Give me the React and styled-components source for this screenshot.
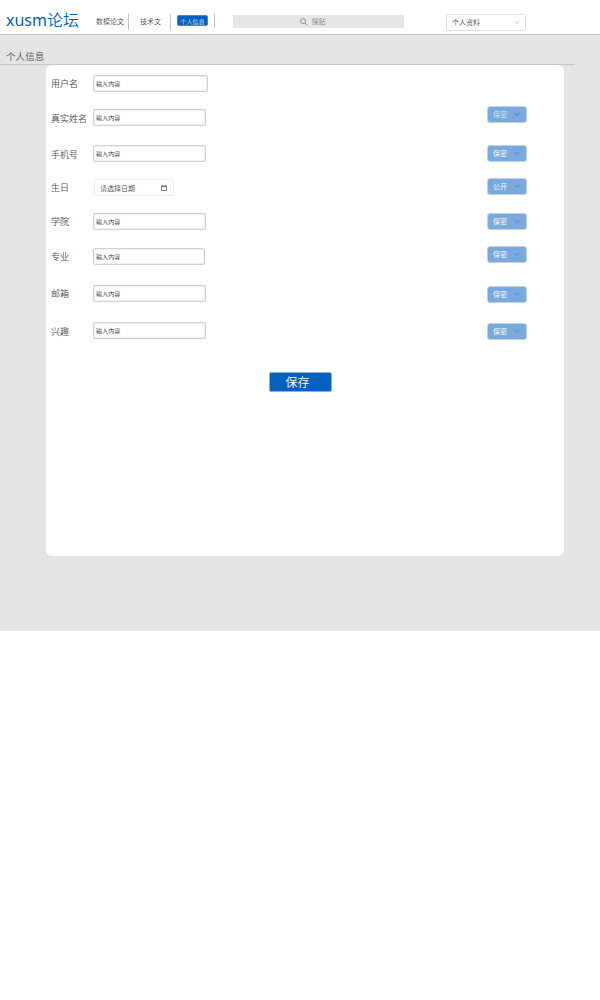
import React from "react";
import styled, { createGlobalStyle } from "styled-components";

const GlobalStyle = createGlobalStyle`
  *, *::before, *::after { box-sizing: border-box; }
  body {
    margin: 0;
    background: #fff;
    color: #505050;
    font-family: "Noto Sans", "Noto Sans CJK SC", sans-serif;
    font-weight: 350;
  }
`;

const Header = styled.header`
  display: flex;
  align-items: flex-start;
  height: 35px;
  padding-left: 6px;
  border-bottom: 1px solid #c8caca;
`;

const Logo = styled.h1`
  width: 90px;
  margin: 8px 0 0;
  color: #0560bf;
  font-size: 16px;
  font-weight: 350;
  line-height: 24px;
  white-space: nowrap;
`;

const LogoName = styled.span`
  font-weight: 400;
`;

const Nav = styled.nav`
  display: flex;
  margin-top: 14px;
`;

const NavItem = styled.span`
  width: ${(p) => p.$width}px;
  height: ${(p) => p.$height || 16}px;
  margin-right: ${(p) => p.$gap}px;
  border-right: 1px solid #c4c4c4;
  font-size: 7px;
  line-height: 16px;
  white-space: nowrap;
`;

const ActiveTag = styled.span`
  display: block;
  width: 31px;
  height: 11px;
  margin-top: 1px;
  border: 1px solid #4089d2;
  border-radius: 2px;
  background: #0560bf;
  color: #e5f0fb;
  font-size: 6.1px;
  line-height: 11px;
  text-align: center;
`;

const Search = styled.div`
  display: flex;
  align-items: center;
  width: 171px;
  height: 13px;
  margin: 15px 0 0 18px;
  padding-left: 67px;
  border-radius: 1px;
  background: #e6e6e6;
  color: #858585;
  font-size: 7px;
  line-height: 13px;

  svg { margin-right: 3.5px; }
`;

const ProfileSelect = styled.div`
  display: flex;
  align-items: center;
  justify-content: space-between;
  width: 80px;
  height: 17px;
  margin: 14px 0 0 42px;
  padding: 0 5px;
  border: 1px solid #e2e2e2;
  border-radius: 2px;
  font-size: 7px;
  line-height: 16px;
`;

const Main = styled.main`
  height: 596px;
  background: #e4e4e4;
`;

const PageTitle = styled.h2`
  width: 575px;
  height: 30px;
  margin: 0;
  padding: 14px 0 0 6px;
  border-bottom: 1px solid #c5c7c7;
  font-size: 9.6px;
  font-weight: 350;
  line-height: 15px;
`;

const Card = styled.section`
  width: 518px;
  height: 491px;
  margin-left: 46px;
  padding: 10px 37px 0 5px;
  border-radius: 6px;
  background: #fff;
`;

const Row = styled.div`
  display: flex;
  align-items: flex-start;
  height: ${(p) => p.$height}px;
`;

const Label = styled.label`
  width: 42px;
  margin-top: ${(p) => p.$shift}px;
  font-size: 9px;
  line-height: 17px;
  white-space: nowrap;
`;

const Field = styled.div`
  width: ${(p) => p.$width}px;
  height: 17px;
  padding: 0 0 0 2px;
  border: 1px solid #d2d2d2;
  border-radius: 2px;
  color: #333;
  font-size: 6.1px;
  line-height: ${(p) => 15 + p.$drop}px;
  box-shadow: inset 0 0 0 1px #f0f0f0;
`;

const DateField = styled.div`
  display: flex;
  align-items: center;
  justify-content: space-between;
  width: 80px;
  height: 17px;
  margin-left: 1px;
  padding: 1px 6px 0 5px;
  border: 1px solid #ececec;
  border-radius: 2px;
  font-size: 7px;
  line-height: 17px;

  svg { margin-bottom: 1px; }
`;

const Privacy = styled.div`
  display: flex;
  align-items: center;
  justify-content: space-between;
  width: 40px;
  height: 17px;
  margin: ${(p) => p.$shift}px 0 0 auto;
  padding: 0 6px 0 5px;
  border: 1px solid #c3d1e0;
  border-radius: 3px;
  background: #79aadd;
  color: ${(p) => (p.$muted ? "#dfe5ec" : "#fff")};
  font-size: 7px;
  line-height: 15px;
`;

const SaveButton = styled.button`
  display: block;
  width: 63px;
  height: 20px;
  margin: 0 0 0 218px;
  padding: 0 6px 0 0;
  border: 1px solid #8ab2dc;
  border-radius: 2px;
  background: #0560bf;
  color: #fff;
  font-family: inherit;
  font-size: 12px;
  font-weight: 350;
  line-height: 17px;
`;

const Chevron = ({ color }) => (
  <svg width="6" height="5" viewBox="0 0 6 5" fill="none" stroke={color} strokeWidth="0.9">
    <path d="M.8 1.2 3 3.5 5.2 1.2" />
  </svg>
);

const SearchIcon = () => (
  <svg width="8" height="8" viewBox="0 0 8 8" fill="none" stroke="#8b8b8b" strokeWidth="0.9">
    <circle cx="3.1" cy="3.1" r="2.5" />
    <path d="m5 5 2.5 2.5" />
  </svg>
);

const CalendarIcon = () => (
  <svg width="6" height="6" viewBox="0 0 6 6" fill="none" stroke="#666" strokeWidth="0.8">
    <path d="M.5 1h5v4.5h-5zM.5 1.6h5M1.7 0v1.3M4.3 0v1.3" />
  </svg>
);

const rows = [
  { label: "用户名", height: 34, width: 115, shift: 0 },
  { label: "真实姓名", height: 36, width: 113, shift: 0.6, privacy: "保密", offset: -3, muted: true, arrow: "#47729f" },
  { label: "手机号", height: 34, width: 113, shift: 0.6, privacy: "保密", offset: 0 },
  { label: "生日", height: 34, date: true, shift: 0, privacy: "公开", offset: -1 },
  { label: "学院", height: 35, width: 113, shift: 0, privacy: "保密", offset: 0 },
  { label: "专业", height: 37, width: 112, shift: 0, drop: 1, privacy: "保密", offset: -2 },
  { label: "邮箱", height: 37, width: 113, shift: 0, privacy: "保密", offset: 1 },
  { label: "兴趣", height: 50, width: 113, shift: 1, privacy: "保密", offset: 1 },
];

export default function App() {
  return (
    <>
      <GlobalStyle />
      <Header>
        <Logo>
          <LogoName>xusm</LogoName>论坛
        </Logo>
        <Nav>
          <NavItem $width={33} $gap={11}>数模论文</NavItem>
          <NavItem $width={31} $gap={6}>技术文</NavItem>
          <NavItem $width={38} $height={14} $gap={0}>
            <ActiveTag>个人信息</ActiveTag>
          </NavItem>
        </Nav>
        <Search>
          <SearchIcon />
          搜贴
        </Search>
        <ProfileSelect>
          个人资料
          <Chevron color="#bbb" />
        </ProfileSelect>
      </Header>
      <Main>
        <PageTitle>个人信息</PageTitle>
        <Card>
          {rows.map((r) => (
            <Row key={r.label} $height={r.height}>
              <Label $shift={r.shift}>{r.label}</Label>
              {r.date ? (
                <DateField>
                  请选择日期
                  <CalendarIcon />
                </DateField>
              ) : (
                <Field $width={r.width} $drop={r.drop || 0}>输入内容</Field>
              )}
              {r.privacy && (
                <Privacy $shift={r.offset} $muted={r.muted}>
                  {r.privacy}
                  <Chevron color={r.arrow || "#5486bd"} />
                </Privacy>
              )}
            </Row>
          ))}
          <SaveButton>保存</SaveButton>
        </Card>
      </Main>
    </>
  );
}
